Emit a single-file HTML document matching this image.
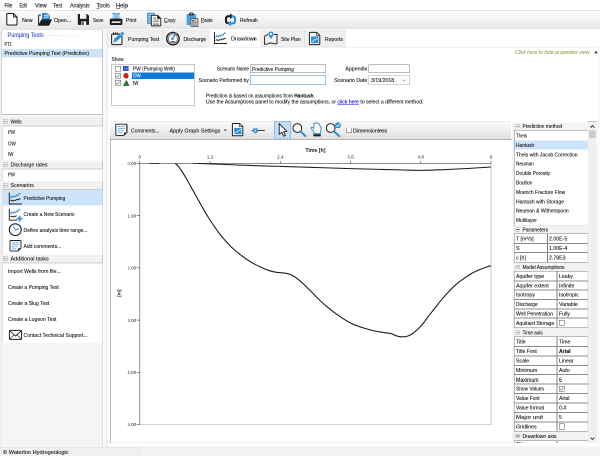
<!DOCTYPE html>
<html><head><meta charset="utf-8"><title>Pumping Test Analysis</title>
<style>
html,body{margin:0;padding:0;background:#f0f0f0;overflow:hidden;}
body{width:600px;height:456px;}
#root{position:absolute;left:0;top:0;width:1200px;height:912px;transform:scale(0.5);transform-origin:0 0;will-change:transform;background:#f0f0f0;font-family:"Liberation Sans",sans-serif;font-size:11px;color:#101010;overflow:hidden;}
.a{position:absolute;box-sizing:border-box;}
.t{font-size:11.6px;-webkit-text-stroke:0.2px;}
.s{font-size:12px;-webkit-text-stroke:0.2px;}
.s2{font-size:11px;-webkit-text-stroke:0.2px;}
.hl{background:#cce4fa;}
.hdr{background:#f1f1f1;border-bottom:1px solid #c9c9c9;border-right:1.4px solid #9c9ca6;}
.wb{background:#fff;}
u{text-decoration:underline;}

</style></head><body>
<div id="root">
<div class="a " style="left:0.00px;top:0.00px;width:1200.00px;height:21.40px;background:#fff;border-bottom:1.4px solid #cbcbcb;"></div>
<div class="a s" style="left:9.00px;top:3.90px;line-height:14px;white-space:nowrap;transform:scaleX(0.791);transform-origin:0 50%;">File</div>
<div class="a s" style="left:39.00px;top:3.90px;line-height:14px;white-space:nowrap;transform:scaleX(0.700);transform-origin:0 50%;">Edit</div>
<div class="a s" style="left:70.00px;top:3.90px;line-height:14px;white-space:nowrap;transform:scaleX(0.903);transform-origin:0 50%;">View</div>
<div class="a s" style="left:106.40px;top:3.90px;line-height:14px;white-space:nowrap;transform:scaleX(0.831);transform-origin:0 50%;">Test</div>
<div class="a s" style="left:140.00px;top:3.90px;line-height:14px;white-space:nowrap;transform:scaleX(0.879);transform-origin:0 50%;">Analysis</div>
<div class="a s" style="left:192.80px;top:3.90px;line-height:14px;white-space:nowrap;transform:scaleX(0.957);transform-origin:0 50%;"><u>T</u>ools</div>
<div class="a s" style="left:232.40px;top:3.90px;line-height:14px;white-space:nowrap;transform:scaleX(0.944);transform-origin:0 50%;"><u>H</u>elp</div>
<div class="a " style="left:0.00px;top:21.40px;width:1200.00px;height:36.40px;background:linear-gradient(#fdfdfd,#f5f5f5 45%,#e5e5e5);"></div>
<div class="a " style="left:0.00px;top:57.80px;width:1200.00px;height:2.20px;background:#fbfbfb;"></div>
<div class="a s2" style="left:43.80px;top:32.60px;line-height:14px;white-space:nowrap;transform:scaleX(0.958);transform-origin:0 50%;">New</div>
<div class="a s2" style="left:108.00px;top:32.60px;line-height:14px;white-space:nowrap;transform:scaleX(0.953);transform-origin:0 50%;">Open...</div>
<div class="a s2" style="left:185.50px;top:32.60px;line-height:14px;white-space:nowrap;transform:scaleX(0.833);transform-origin:0 50%;">Save</div>
<div class="a s2" style="left:252.00px;top:32.60px;line-height:14px;white-space:nowrap;transform:scaleX(0.937);transform-origin:0 50%;">Print</div>
<div class="a s2" style="left:327.50px;top:32.60px;line-height:14px;white-space:nowrap;transform:scaleX(0.899);transform-origin:0 50%;"><u>C</u>opy</div>
<div class="a s2" style="left:402.00px;top:32.60px;line-height:14px;white-space:nowrap;transform:scaleX(0.832);transform-origin:0 50%;"><u>P</u>aste</div>
<div class="a s2" style="left:480.00px;top:32.60px;line-height:14px;white-space:nowrap;transform:scaleX(0.919);transform-origin:0 50%;">Refresh</div>
<svg class="a" style="left:10.00px;top:24.00px" width="28" height="30" viewBox="5 12 14 15"><path d="M7.6 13.5 H13.4 L17 17 V24.2 Q17 25 16.2 25 H7.6 Q6.8 25 6.8 24.2 V14.3 Q6.8 13.5 7.6 13.5Z" fill="#fff" stroke="#1e1e1e" stroke-width="1.05" stroke-linejoin="round"/><path d="M13.4 13.6 V17 H16.9" fill="none" stroke="#1e1e1e" stroke-width="0.9"/></svg>
<svg class="a" style="left:72.00px;top:23.00px" width="36" height="32" viewBox="36 11.5 18 16"><path d="M42 19.5 V13.6 Q42 12.9 42.7 12.9 H47.2 L50 15.6 V19.5Z" fill="#2f8fd6"/><path d="M44 15.4 H47 M44 17.2 H48.4" stroke="#e6f2fb" stroke-width="0.8"/><path d="M47 13 V15.8 H49.8" fill="none" stroke="#cfe6f7" stroke-width="0.6"/><path d="M38.6 25 V15.6 Q38.6 15 39.2 15 H41" fill="none" stroke="#1e1e1e" stroke-width="1.0"/><path d="M41.6 19.6 H51.8 L48.9 25.5 H38.3Z" fill="#1e1e1e" stroke="#1e1e1e" stroke-width="0.5" stroke-linejoin="round"/></svg>
<svg class="a" style="left:152.00px;top:25.00px" width="30" height="28" viewBox="76 12.5 15 14"><path d="M77.8 14.6 Q77.8 14 78.4 14 H87.2 L89 15.8 V24.3 Q89 24.9 88.4 24.9 H78.4 Q77.8 24.9 77.8 24.3Z" fill="#1e1e1e"/><rect x="80" y="14" width="6.4" height="4.8" fill="#f4f9fd"/><rect x="84.6" y="14.2" width="1.2" height="3.6" fill="#d3e6f5"/><rect x="81.4" y="21.4" width="4.8" height="3.5" fill="#fff"/><rect x="82.2" y="22" width="1.4" height="2.9" fill="#1e1e1e"/></svg>
<svg class="a" style="left:216.00px;top:24.00px" width="32" height="28" viewBox="108 12 16 14"><rect x="112.6" y="13" width="7.2" height="6" fill="#9ccbee"/><rect x="112.6" y="13" width="7.2" height="1" fill="#2f8fd6"/><rect x="114.8" y="13" width="2.8" height="6" fill="#7fbbe8"/><rect x="109.8" y="18.6" width="12.6" height="6.4" rx="1.3" fill="#1e1e1e"/><rect x="111.8" y="21.4" width="8.8" height="1.5" fill="#fff"/></svg>
<svg class="a" style="left:291.00px;top:24.00px" width="34" height="30" viewBox="145.5 12 17 15"><rect x="147" y="12.8" width="8" height="11.2" rx="0.5" fill="#4d9fe0"/><path d="M148.4 14.8 H153.6 M148.4 16.6 H151 M148.4 18.4 H151 M148.4 20.2 H151 M148.4 22 H151" stroke="#d8ebf9" stroke-width="0.7"/><path d="M152 15.3 H157.6 L160.8 18.4 V25.2 Q160.8 25.9 160.1 25.9 H152 Q151.3 25.9 151.3 25.2 V16 Q151.3 15.3 152 15.3Z" fill="#fafafa" stroke="#1e1e1e" stroke-width="0.95"/><path d="M157.4 15.4 V18.6 H160.6" fill="#1e1e1e" stroke="#1e1e1e" stroke-width="0.4"/><path d="M153 20 H159 M153 21.6 H159 M153 23.2 H159 M153 24.6 H159" stroke="#777" stroke-width="0.7"/><path d="M153 18 H156" stroke="#555" stroke-width="0.8"/></svg>
<svg class="a" style="left:371.00px;top:23.00px" width="28" height="33.0" viewBox="185.5 11.5 14 16.5"><rect x="186.6" y="14" width="9.6" height="11" rx="0.8" fill="#4d9fe0"/><path d="M189 15.4 V14.2 Q189 12.4 191.4 12.4 Q193.8 12.4 193.8 14.2 V15.4Z" fill="#1e1e1e"/><rect x="190.4" y="13.3" width="2" height="1" fill="#cfe6f7"/><rect x="190.9" y="18.6" width="7" height="8" fill="#d2d2d2" stroke="#4a4a4a" stroke-width="0.7"/><path d="M195.6 18.8 V20.9 H197.7" fill="#fff" stroke="#4a4a4a" stroke-width="0.4"/><path d="M192 22.6 H196.8 M192 23.9 H196.8 M192 25.2 H196.8" stroke="#666" stroke-width="0.65"/><rect x="192" y="19.9" width="2.4" height="1.6" fill="#666"/></svg>
<svg class="a" style="left:447.00px;top:25.00px" width="28" height="29.0" viewBox="223.5 12.5 14 14.5"><path d="M229.6 23.2 H228.4 Q226 23.2 226 20.8 V19 Q226 16.2 228.8 16.2 H231" fill="none" stroke="#1e1e1e" stroke-width="2.1"/><path d="M230.2 13.2 L233.6 16.2 L230.2 19.2Z" fill="#1e1e1e"/><path d="M231.4 16.4 H232.6 Q235 16.4 235 18.8 V20.6 Q235 23.4 232.2 23.4 H230" fill="none" stroke="#2f8fd6" stroke-width="2.1"/><path d="M230.8 20.4 L227.4 23.4 L230.8 26.4Z" fill="#2f8fd6"/></svg>
<div class="a " style="left:2.40px;top:59.20px;width:203.40px;height:170.00px;background:#fff;border:1px solid #8e94a6;border-left:1.4px solid #a6aab4;border-top:1px solid #c8c8c8;"></div>
<div class="a s" style="left:15.20px;top:63.40px;line-height:14px;white-space:nowrap;transform:scaleX(0.922);transform-origin:0 50%;color:#3347c4;">Pumping Tests</div>
<div class="a " style="left:93.00px;top:70.80px;width:108.00px;height:1.20px;background:linear-gradient(90deg,#d6ddf5,#fff);"></div>
<div class="a t" style="left:9.00px;top:81.00px;line-height:14px;white-space:nowrap;transform:scaleX(0.700);transform-origin:0 50%;">PT1</div>
<div class="a hl" style="left:4.00px;top:97.60px;width:201.00px;height:17.20px;"></div>
<div class="a t" style="left:9.00px;top:99.40px;line-height:14px;white-space:nowrap;transform:scaleX(0.906);transform-origin:0 50%;">Predictive Pumping Test (Prediction)</div>
<div class="a " style="left:3.00px;top:229.60px;width:203.00px;height:4.80px;background:#f8f8f8;"></div>
<div class="a hdr" style="left:3.00px;top:234.00px;width:203.00px;height:17.60px;"></div>
<div class="a " style="left:6.40px;top:238.40px;width:8.60px;height:8.60px;border:1px solid #a2a8b8;background:linear-gradient(#fff,#eceef4);"></div>
<div class="a " style="left:8.40px;top:242.00px;width:4.60px;height:1.40px;background:#445;"></div>
<div class="a t" style="left:21.00px;top:235.80px;line-height:14px;white-space:nowrap;transform:scaleX(0.796);transform-origin:0 50%;">Wells</div>
<div class="a " style="left:4.00px;top:251.60px;width:202.00px;height:70.40px;background:#fff;border-left:1.6px solid #bdbdc2;border-right:1px solid #c4c4cc;border-top:1.4px solid #d0d0d0;border-radius:4px 0 0 0;"></div>
<div class="a t" style="left:16.00px;top:257.00px;line-height:14px;white-space:nowrap;transform:scaleX(0.749);transform-origin:0 50%;">PW</div>
<div class="a t" style="left:16.00px;top:279.60px;line-height:14px;white-space:nowrap;transform:scaleX(0.781);transform-origin:0 50%;">OW</div>
<div class="a t" style="left:16.00px;top:301.40px;line-height:14px;white-space:nowrap;transform:scaleX(0.762);transform-origin:0 50%;">IW</div>
<div class="a hdr" style="left:3.00px;top:321.20px;width:203.00px;height:16.40px;"></div>
<div class="a " style="left:6.40px;top:325.00px;width:8.60px;height:8.60px;border:1px solid #a2a8b8;background:linear-gradient(#fff,#eceef4);"></div>
<div class="a " style="left:8.40px;top:328.60px;width:4.60px;height:1.40px;background:#445;"></div>
<div class="a t" style="left:21.00px;top:322.40px;line-height:14px;white-space:nowrap;transform:scaleX(0.911);transform-origin:0 50%;">Discharge rates</div>
<div class="a " style="left:4.00px;top:337.60px;width:202.00px;height:24.80px;background:#fff;border-left:1.6px solid #bdbdc2;border-right:1px solid #c4c4cc;border-top:1.4px solid #d0d0d0;border-radius:4px 0 0 0;"></div>
<div class="a t" style="left:16.00px;top:342.40px;line-height:14px;white-space:nowrap;transform:scaleX(0.749);transform-origin:0 50%;">PW</div>
<div class="a hdr" style="left:3.00px;top:362.00px;width:203.00px;height:16.80px;"></div>
<div class="a " style="left:6.40px;top:366.00px;width:8.60px;height:8.60px;border:1px solid #a2a8b8;background:linear-gradient(#fff,#eceef4);"></div>
<div class="a " style="left:8.40px;top:369.60px;width:4.60px;height:1.40px;background:#445;"></div>
<div class="a t" style="left:21.00px;top:363.40px;line-height:14px;white-space:nowrap;transform:scaleX(0.900);transform-origin:0 50%;">Scenarios</div>
<div class="a " style="left:4.00px;top:378.80px;width:202.00px;height:130.00px;background:#fff;border-left:1.6px solid #bdbdc2;border-right:1px solid #c4c4cc;border-top:1.4px solid #d0d0d0;border-radius:4px 0 0 0;"></div>
<div class="a hl" style="left:6.00px;top:379.60px;width:198.60px;height:31.60px;"></div>
<div class="a t" style="left:47.40px;top:388.80px;line-height:14px;white-space:nowrap;transform:scaleX(0.837);transform-origin:0 50%;">Predictive Pumping</div>
<div class="a t" style="left:47.40px;top:421.00px;line-height:14px;white-space:nowrap;transform:scaleX(0.851);transform-origin:0 50%;">Create a New Scenario</div>
<div class="a t" style="left:47.40px;top:453.00px;line-height:14px;white-space:nowrap;transform:scaleX(0.878);transform-origin:0 50%;">Define analysis time range...</div>
<div class="a t" style="left:47.40px;top:484.60px;line-height:14px;white-space:nowrap;transform:scaleX(0.869);transform-origin:0 50%;">Add comments...</div>
<div class="a hdr" style="left:3.00px;top:509.20px;width:203.00px;height:16.40px;"></div>
<div class="a " style="left:6.40px;top:513.00px;width:8.60px;height:8.60px;border:1px solid #a2a8b8;background:linear-gradient(#fff,#eceef4);"></div>
<div class="a " style="left:8.40px;top:516.60px;width:4.60px;height:1.40px;background:#445;"></div>
<div class="a t" style="left:21.00px;top:510.40px;line-height:14px;white-space:nowrap;transform:scaleX(0.941);transform-origin:0 50%;">Additional tasks</div>
<div class="a " style="left:4.00px;top:525.60px;width:202.00px;height:160.00px;background:#fff;border-left:1.6px solid #bdbdc2;border-right:1px solid #c4c4cc;border-top:1.4px solid #d0d0d0;border-radius:4px 0 0 0;"></div>
<div class="a t" style="left:16.00px;top:535.00px;line-height:14px;white-space:nowrap;transform:scaleX(0.892);transform-origin:0 50%;">Import Wells from file...</div>
<div class="a t" style="left:16.00px;top:567.20px;line-height:14px;white-space:nowrap;transform:scaleX(0.863);transform-origin:0 50%;">Create a Pumping Test</div>
<div class="a t" style="left:16.00px;top:599.40px;line-height:14px;white-space:nowrap;transform:scaleX(0.868);transform-origin:0 50%;">Create a Slug Test</div>
<div class="a t" style="left:16.00px;top:631.40px;line-height:14px;white-space:nowrap;transform:scaleX(0.875);transform-origin:0 50%;">Create a Lugeon Test</div>
<div class="a t" style="left:47.40px;top:663.00px;line-height:14px;white-space:nowrap;transform:scaleX(0.887);transform-origin:0 50%;">Contact Technical Support...</div>
<div class="a " style="left:3.00px;top:685.60px;width:203.00px;height:208.00px;background:#f5f5f5;border-right:2px solid #e2e2e2;"></div>
<svg class="a" style="left:16.00px;top:383.00px" width="30" height="28" viewBox="8 191.5 15 14"><path d="M9.3 192.5 V204.0 H21.8" fill="none" stroke="#1e1e1e" stroke-width="0.95"/><path d="M10.3 198.1 L11.5 196.1 L12.700000000000001 197.5 L14.100000000000001 195.9 L15.3 196.7 L16.700000000000003 194.9 L17.700000000000003 195.9 L19.3 193.3 L20.700000000000003 194.1" fill="none" stroke="#2f8fd6" stroke-width="0.95" stroke-linejoin="round"/><path d="M10.3 200.9 L11.700000000000001 200.1 L12.9 201.1 L14.3 200.1 L15.5 200.5 L16.9 199.3 L18.1 199.9 L19.5 198.7 L20.700000000000003 199.1" fill="none" stroke="#1e1e1e" stroke-width="0.9" stroke-linejoin="round"/></svg>
<svg class="a" style="left:16.00px;top:415.00px" width="30" height="30" viewBox="8 207.5 15 15"><path d="M9.3 208.5 V220.2 H17.2" fill="none" stroke="#1e1e1e" stroke-width="0.95"/><path d="M10.3 214.1 L11.5 212.1 L12.7 213.5 L14.1 211.9 L15.3 212.7 L16.7 210.9 L17.7 211.9 L19.3 209.3 L20.7 210.1" fill="none" stroke="#2f8fd6" stroke-width="0.95" stroke-linejoin="round"/><path d="M10.3 216.9 L11.7 216.1 L12.9 217.1 L14.3 216.1 L15.5 216.5 L16.6 215.6" fill="none" stroke="#1e1e1e" stroke-width="0.9" stroke-linejoin="round"/><path d="M19.6 215.8 V221.6 M16.7 218.7 H22.5" stroke="#2f8fd6" stroke-width="1.7"/></svg>
<svg class="a" style="left:16.00px;top:445.00px" width="30" height="30" viewBox="8 222.5 15 15"><circle cx="15.3" cy="229.7" r="5.9" fill="#fff" stroke="#1e1e1e" stroke-width="1.15"/><path d="M13.6 226.6 L15.5 230.2 L18.6 228.6" fill="none" stroke="#2f8fd6" stroke-width="1.0" stroke-linejoin="round" stroke-linecap="round"/></svg>
<svg class="a" style="left:18.00px;top:479.00px" width="28" height="26" viewBox="9 239.5 14 13"><path d="M10.8 240.5 H20.2 Q21 240.5 21 241.3 V248.1 L18 251.1 H10.8 Q10 251.1 10 250.29999999999998 V241.3 Q10 240.5 10.8 240.5Z" fill="#f3f8fd" stroke="#1e1e1e" stroke-width="0.9" stroke-linejoin="round"/><path d="M21 248.5 H18.4 V251.1Z" fill="#1e1e1e" stroke="#1e1e1e" stroke-width="0.4"/><path d="M12 242.9 H15 M16 242.9 H19 M12 244.9 H19 M12 246.9 H14.4 M15.4 246.9 H17.6 M12 248.9 H16.4" stroke="#2f8fd6" stroke-width="0.75" opacity="0.8"/></svg>
<svg class="a" style="left:16.00px;top:658.00px" width="30" height="24" viewBox="8 329 15 12"><rect x="9.4" y="330.4" width="12.2" height="9" rx="1" fill="#fff" stroke="#1e1e1e" stroke-width="1.0"/><path d="M9.8 330.9 L15.5 336 L21.2 330.9" fill="none" stroke="#1e1e1e" stroke-width="0.85"/><path d="M9.8 339 L13.8 335 M21.2 339 L17.2 335" stroke="#1e1e1e" stroke-width="0.6"/></svg>
<div class="a " style="left:206.00px;top:60.00px;width:7.20px;height:833.20px;background:#f9f9f9;border-right:1px solid #ececec;"></div>
<div class="a " style="left:213.60px;top:60.00px;width:986.40px;height:833.20px;background:#fff;"></div>
<div class="a " style="left:213.60px;top:93.80px;width:983.80px;height:799.40px;border-top:1px solid #e4e4e4;border-right:1px solid #e4e4e4;border-left:1px solid #e4e4e4;"></div>
<div class="a " style="left:214.00px;top:59.60px;width:111.00px;height:34.00px;background:#f0f0f0;border:1px solid #e2e2e2;"></div>
<div class="a s2" style="left:256.00px;top:71.00px;line-height:14px;white-space:nowrap;transform:scaleX(0.939);transform-origin:0 50%;">Pumping Test</div>
<div class="a " style="left:325.00px;top:59.60px;width:94.40px;height:34.00px;background:#f0f0f0;border:1px solid #e2e2e2;"></div>
<div class="a s2" style="left:367.00px;top:71.00px;line-height:14px;white-space:nowrap;transform:scaleX(0.917);transform-origin:0 50%;">Discharge</div>
<div class="a " style="left:419.40px;top:59.60px;width:101.80px;height:34.80px;background:#fff;"></div>
<div class="a s2" style="left:462.00px;top:70.00px;line-height:14px;white-space:nowrap;transform:scaleX(0.989);transform-origin:0 50%;">Drawdown</div>
<div class="a " style="left:521.20px;top:59.60px;width:88.00px;height:34.00px;background:#f0f0f0;border:1px solid #e2e2e2;"></div>
<div class="a s2" style="left:562.00px;top:71.00px;line-height:14px;white-space:nowrap;transform:scaleX(0.895);transform-origin:0 50%;">Site Plan</div>
<div class="a " style="left:609.20px;top:59.60px;width:82.80px;height:34.00px;background:#f0f0f0;border:1px solid #e2e2e2;"></div>
<div class="a s2" style="left:650.00px;top:71.00px;line-height:14px;white-space:nowrap;transform:scaleX(0.929);transform-origin:0 50%;">Reports</div>
<svg class="a" style="left:218.00px;top:61.00px" width="34" height="32" viewBox="109 30.5 17 16"><rect x="111.6" y="34" width="10.4" height="10.6" rx="1.2" fill="none" stroke="#1e1e1e" stroke-width="1.0"/><path d="M113.4 32.2 V35 M115.3 32.2 V35 M117.2 32.2 V35" stroke="#1e1e1e" stroke-width="0.85"/><path d="M113.2 42.4 L114 39.4 L121.4 32.2 Q122.6 31.6 123.6 32.8 Q124.4 33.8 123.6 34.8 L116.2 41.8Z" fill="#2f8fd6"/><path d="M114.6 40.4 L115.6 41.4 M120.2 33.4 L122.4 35.8" stroke="#e4f1fb" stroke-width="0.6"/></svg>
<svg class="a" style="left:330.00px;top:62.00px" width="32" height="32" viewBox="165 31 16 16"><circle cx="172.9" cy="38.6" r="6.2" fill="#fff" stroke="#1e1e1e" stroke-width="1.4"/><circle cx="172.9" cy="38.6" r="4.6" fill="none" stroke="#7c7c7c" stroke-width="1.0"/><path d="M172.2 39.4 L175.8 33.4" stroke="#2f8fd6" stroke-width="1.5" stroke-linecap="round"/><circle cx="172.4" cy="39" r="1.2" fill="#2f8fd6"/><path d="M170.8 41.8 H175" stroke="#1e1e1e" stroke-width="0.9"/></svg>
<svg class="a" style="left:426.00px;top:62.00px" width="32" height="28" viewBox="213 31 16 14"><path d="M214.5 32 V43.5 H227.0" fill="none" stroke="#1e1e1e" stroke-width="0.95"/><path d="M215.5 37.6 L216.7 35.6 L217.9 37 L219.3 35.4 L220.5 36.2 L221.9 34.4 L222.9 35.4 L224.5 32.8 L225.9 33.6" fill="none" stroke="#2f8fd6" stroke-width="0.95" stroke-linejoin="round"/><path d="M215.5 40.4 L216.9 39.6 L218.1 40.6 L219.5 39.6 L220.7 40 L222.1 38.8 L223.3 39.4 L224.7 38.2 L225.9 38.6" fill="none" stroke="#1e1e1e" stroke-width="0.9" stroke-linejoin="round"/></svg>
<svg class="a" style="left:526.00px;top:61.00px" width="32" height="30" viewBox="263 30.5 16 15"><path d="M264.6 36 L268 34.4 M274 34.6 L277 34.4 V43.6 Q275 44.2 272.8 43.4 Q270.4 42.6 268.6 43.4 Q266.6 44.4 264.6 44.4 V36" fill="none" stroke="#1e1e1e" stroke-width="0.95" stroke-linejoin="round"/><path d="M271 38.8 Q268.4 35.6 268.4 34 Q268.4 31.6 271 31.6 Q273.6 31.6 273.6 34 Q273.6 35.6 271 38.8Z" fill="#2f8fd6"/><circle cx="271" cy="34" r="1.1" fill="#fff"/></svg>
<svg class="a" style="left:616.00px;top:62.00px" width="28" height="30" viewBox="308 31 14 15"><path d="M310 32.4 H316.6 L319.8 35.4 V44 Q319.8 44.6 319.2 44.6 H310 Q309.4 44.6 309.4 44 V33 Q309.4 32.4 310 32.4Z" fill="#fff" stroke="#1e1e1e" stroke-width="1.0"/><path d="M316.4 32.6 V35.6 H319.6" fill="#ddd" stroke="#1e1e1e" stroke-width="0.6"/><rect x="311" y="36.4" width="7.4" height="6.8" fill="#2f8fd6"/><path d="M311.6 41.6 Q313.4 41.4 314.4 40 Q315.4 38.8 317.8 38.8" fill="none" stroke="#e8f3fb" stroke-width="0.8"/></svg>
<div class="a t" style="right:21.60px;top:97.00px;line-height:14px;white-space:nowrap;transform:scaleX(0.874);transform-origin:100% 50%;font-style:italic;color:#8c8c34;-webkit-text-stroke:0;">Click here to hide properties view</div>
<svg class="a" style="left:1187.6px;top:101.4px" width="8" height="6" viewBox="0 0 8 6"><path d="M0.5 5.5 L4 0.8 L7.5 5.5Z" fill="#222"/></svg>
<div class="a t" style="left:223.40px;top:111.40px;line-height:14px;white-space:nowrap;transform:scaleX(0.841);transform-origin:0 50%;">Show</div>
<div class="a " style="left:223.20px;top:128.40px;width:166.60px;height:82.40px;background:#fff;border:1px solid #8e93a0;"></div>
<div class="a " style="left:263.60px;top:144.60px;width:124.80px;height:13.40px;background:#0a78d7;"></div>
<div class="a " style="left:230.20px;top:131.60px;width:11.60px;height:11.60px;background:#fff;border:1px solid #5a5a5a;"></div>
<div class="a t" style="left:265.60px;top:130.40px;line-height:14px;white-space:nowrap;transform:scaleX(0.830);transform-origin:0 50%;">PW (Pumping Well)</div>
<div class="a " style="left:230.20px;top:145.60px;width:11.60px;height:11.60px;background:#fff;border:1px solid #5a5a5a;"></div>
<svg class="a" style="left:230.2px;top:145.6px" width="11.6" height="11.6" viewBox="0 0 10.4 10.4"><path d="M2.4 5.2 L4.4 7.4 L8 2.8" fill="none" stroke="#666" stroke-width="1.1"/></svg>
<div class="a t" style="left:265.60px;top:144.40px;line-height:14px;white-space:nowrap;transform:scaleX(0.781);transform-origin:0 50%;color:#fff;">OW</div>
<div class="a " style="left:230.20px;top:159.80px;width:11.60px;height:11.60px;background:#fff;border:1px solid #5a5a5a;"></div>
<svg class="a" style="left:230.2px;top:159.79999999999998px" width="11.6" height="11.6" viewBox="0 0 10.4 10.4"><path d="M2.4 5.2 L4.4 7.4 L8 2.8" fill="none" stroke="#666" stroke-width="1.1"/></svg>
<div class="a t" style="left:265.60px;top:158.60px;line-height:14px;white-space:nowrap;transform:scaleX(0.762);transform-origin:0 50%;">IW</div>
<div class="a " style="left:246.40px;top:132.00px;width:10.80px;height:10.40px;background:#4470e4;border:1px solid #1c3fa0;"></div>
<div class="a " style="left:246.60px;top:145.80px;width:10.80px;height:10.80px;background:#d81c1c;border:1px solid #901010;border-radius:50%;"></div>
<svg class="a" style="left:245.6px;top:159.6px" width="13" height="12" viewBox="0 0 13 12"><path d="M6.5 0.8 L12.2 11.2 L0.8 11.2Z" fill="#1f8a3a" stroke="#0e5020" stroke-width="1"/></svg>
<div class="a t" style="right:702.40px;top:130.40px;line-height:14px;white-space:nowrap;transform:scaleX(0.806);transform-origin:100% 50%;">Scenario Name</div>
<div class="a " style="left:500.00px;top:129.20px;width:152.00px;height:16.80px;background:#fff;border:1px solid #7a7a7a;"></div>
<div class="a t" style="left:504.00px;top:130.80px;line-height:14px;white-space:nowrap;transform:scaleX(0.837);transform-origin:0 50%;">Predictive Pumping</div>
<div class="a t" style="right:702.40px;top:153.20px;line-height:14px;white-space:nowrap;transform:scaleX(0.847);transform-origin:100% 50%;">Scenario Performed by</div>
<div class="a " style="left:500.00px;top:151.20px;width:152.00px;height:18.80px;background:#fff;border:1.6px solid #3b8ee0;"></div>
<div class="a t" style="right:465.40px;top:130.40px;line-height:14px;white-space:nowrap;transform:scaleX(0.900);transform-origin:100% 50%;">Appendix</div>
<div class="a " style="left:737.00px;top:129.20px;width:81.60px;height:16.80px;background:#fff;border:1px solid #7a7a7a;"></div>
<div class="a t" style="right:465.40px;top:153.20px;line-height:14px;white-space:nowrap;transform:scaleX(0.900);transform-origin:100% 50%;">Scenario Date</div>
<div class="a " style="left:737.00px;top:151.20px;width:83.20px;height:18.80px;background:#fff;border:1px solid #adadad;"></div>
<div class="a t" style="left:742.00px;top:153.40px;line-height:14px;white-space:nowrap;transform:scaleX(0.900);transform-origin:0 50%;">3/19/2018</div>
<svg class="a" style="left:804.4px;top:158px" width="9" height="6" viewBox="0 0 9 6"><path d="M1 1 L4.5 4.6 L8 1" fill="none" stroke="#444" stroke-width="1"/></svg>
<div class="a t" style="left:412.00px;top:184.00px;line-height:14px;white-space:nowrap;transform:scaleX(0.832);transform-origin:0 50%;">Prediction is based on assumptions from <b>Hantush</b>.</div>
<div class="a t" style="left:412.00px;top:196.20px;line-height:14px;white-space:nowrap;transform:scaleX(0.881);transform-origin:0 50%;">Use the Assumptions panel to modify the assumptions, or <span style="color:#0000ee;text-decoration:underline">click here</span> to select a different method.</div>
<div class="a " style="left:220.00px;top:242.00px;width:802.00px;height:34.80px;background:linear-gradient(#fafafa,#f0f0f0 45%,#e2e2e2);border-top:1px solid #e2e2e2;border-bottom:1px solid #bdbdbd;"></div>
<div class="a s2" style="left:262.00px;top:253.60px;line-height:14px;white-space:nowrap;transform:scaleX(0.917);transform-origin:0 50%;">Comments...</div>
<div class="a s2" style="left:339.20px;top:253.60px;line-height:14px;white-space:nowrap;transform:scaleX(0.977);transform-origin:0 50%;">Apply Graph Settings</div>
<svg class="a" style="left:446.8px;top:259.2px" width="7" height="4" viewBox="0 0 7 4"><path d="M0.5 0.3 L6.5 0.3 L3.5 3.6Z" fill="#222"/></svg>
<div class="a " style="left:548.00px;top:243.40px;width:34.00px;height:33.20px;background:#c3def6;border:1px solid #4f9be3;"></div>
<div class="a " style="left:692.60px;top:254.60px;width:11.60px;height:11.60px;background:#fff;border:1px solid #555;"></div>
<div class="a s2" style="left:706.00px;top:253.60px;line-height:14px;white-space:nowrap;transform:scaleX(0.953);transform-origin:0 50%;">Dimensionless</div>
<svg class="a" style="left:229.00px;top:246.00px" width="28" height="28" viewBox="114.5 123 14 14"><path d="M116.6 124.2 H126.0 Q126.8 124.2 126.8 125.0 V132.4 L123.8 135.4 H116.6 Q115.8 135.4 115.8 134.6 V125.0 Q115.8 124.2 116.6 124.2Z" fill="#f3f8fd" stroke="#1e1e1e" stroke-width="0.9" stroke-linejoin="round"/><path d="M126.8 132.8 H124.2 V135.4Z" fill="#1e1e1e" stroke="#1e1e1e" stroke-width="0.4"/><path d="M117.8 126.60000000000001 H120.8 M121.8 126.60000000000001 H124.8 M117.8 128.6 H124.8 M117.8 130.6 H120.2 M121.2 130.6 H123.39999999999999 M117.8 132.6 H122.2" stroke="#2f8fd6" stroke-width="0.75" opacity="0.8"/></svg>
<svg class="a" style="left:462.00px;top:244.00px" width="28" height="30" viewBox="231 122 14 15"><path d="M233 123.5 H239.6 L242.8 126.5 V135.2 Q242.8 135.8 242.2 135.8 H233 Q232.4 135.8 232.4 135.2 V124.1 Q232.4 123.5 233 123.5Z" fill="#fff" stroke="#1e1e1e" stroke-width="1.0"/><path d="M239.4 123.7 V126.7 H242.6" fill="#ddd" stroke="#1e1e1e" stroke-width="0.6"/><rect x="234.2" y="127.6" width="7.2" height="6.6" fill="#2f8fd6"/><path d="M234.8 132.8 Q236.6 132.6 237.6 131.2 Q238.6 130 241 130" fill="none" stroke="#e8f3fb" stroke-width="0.8"/></svg>
<svg class="a" style="left:500.00px;top:252.00px" width="34" height="18" viewBox="250 126 17 9"><path d="M251.6 130.4 H264.8" stroke="#1e1e1e" stroke-width="0.85"/><path d="M253.2 128.2 H257.7 V131 Q257.7 132.8 255.45 133.7 Q253.2 132.8 253.2 131Z" fill="#3f99dc"/><ellipse cx="255.45" cy="130.7" rx="0.55" ry="0.9" fill="#fff"/></svg>
<svg class="a" style="left:554.00px;top:244.00px" width="24" height="32" viewBox="277 122 12 16"><path d="M279.2 123.6 V134.4 L281.8 132.2 L283.6 136.2 L285.4 135.4 L283.6 131.6 L287 131.4Z" fill="#fff" stroke="#1e1e1e" stroke-width="0.9" stroke-linejoin="round"/></svg>
<svg class="a" style="left:583.00px;top:244.00px" width="32" height="32" viewBox="291.5 122 16 16"><circle cx="297.3" cy="128" r="4.4" fill="#fff" fill-opacity="0.6" stroke="#1e1e1e" stroke-width="1.0"/><path d="M300.6 131.4 L305.4 136" stroke="#2f8fd6" stroke-width="2.1" stroke-linecap="round"/></svg>
<svg class="a" style="left:619.00px;top:243.00px" width="28" height="32" viewBox="309.5 121.5 14 16"><path d="M313.8 133.6 V131.4 L311.2 128.6 Q310.6 127.4 311.8 127.2 Q312.8 127.2 313.8 128.4 V124.4 Q313.8 123 315.6 123 H317 Q319 123.2 319.6 125 L321 127.6 Q321.4 129 320.8 130.4 L320.4 133.6Z" fill="#fff" fill-opacity="0.7" stroke="#2f8fd6" stroke-width="0.95" stroke-linejoin="round"/><rect x="313.4" y="134.2" width="7.4" height="2.2" rx="0.4" fill="#1e1e1e"/></svg>
<svg class="a" style="left:650.00px;top:243.00px" width="34" height="33.0" viewBox="325 121.5 17 16.5"><circle cx="330.7" cy="128" r="4.4" fill="#fff" fill-opacity="0.6" stroke="#1e1e1e" stroke-width="1.0"/><path d="M334 131.4 L339.4 136.2" stroke="#2f8fd6" stroke-width="2.1" stroke-linecap="round"/><circle cx="338" cy="125.2" r="2.9" fill="#2f8fd6"/><path d="M336.5 125.3 L337.6 126.5 L339.6 124" fill="none" stroke="#fff" stroke-width="0.8"/></svg>
<div class="a " style="left:220.00px;top:278.00px;width:804.00px;height:608.00px;background:#fff;border-left:1.6px solid #6e6e6e;border-top:1.6px solid #6e6e6e;border-bottom:1px solid #e3e3e3;"></div>
<svg class="a" style="left:220px;top:278px" width="804" height="608" viewBox="110 139 402 304"><style>.ct{font:4.7px "Liberation Sans",sans-serif;fill:#262626}.cb{font:bold 5.2px "Liberation Sans",sans-serif;fill:#222}</style><path d="M491 163.4 V424.5 H139.8" fill="none" stroke="#a4a4a4" stroke-width="0.6"/><path d="M139.8 424.5 V163.4 H491" fill="none" stroke="#4a4a4a" stroke-width="0.6"/><path d="M139.80 161.0 V163.4" stroke="#3a3a3a" stroke-width="0.6"/><text x="139.80" y="158.7" text-anchor="middle" class="ct">0</text><path d="M210.04 161.0 V163.4" stroke="#3a3a3a" stroke-width="0.6"/><text x="210.04" y="158.7" text-anchor="middle" class="ct">1.2</text><path d="M280.28 161.0 V163.4" stroke="#3a3a3a" stroke-width="0.6"/><text x="280.28" y="158.7" text-anchor="middle" class="ct">2.4</text><path d="M350.52 161.0 V163.4" stroke="#3a3a3a" stroke-width="0.6"/><text x="350.52" y="158.7" text-anchor="middle" class="ct">3.6</text><path d="M420.76 161.0 V163.4" stroke="#3a3a3a" stroke-width="0.6"/><text x="420.76" y="158.7" text-anchor="middle" class="ct">4.8</text><path d="M491.00 161.0 V163.4" stroke="#3a3a3a" stroke-width="0.6"/><text x="491.00" y="158.7" text-anchor="middle" class="ct">6</text><path d="M136.8 163.40 H139.8" stroke="#3a3a3a" stroke-width="0.6"/><text x="136.2" y="165.10" text-anchor="end" class="ct">0.00</text><path d="M136.8 215.62 H139.8" stroke="#3a3a3a" stroke-width="0.6"/><text x="136.2" y="217.32" text-anchor="end" class="ct">1.00</text><path d="M136.8 267.84 H139.8" stroke="#3a3a3a" stroke-width="0.6"/><text x="136.2" y="269.54" text-anchor="end" class="ct">2.00</text><path d="M136.8 320.06 H139.8" stroke="#3a3a3a" stroke-width="0.6"/><text x="136.2" y="321.76" text-anchor="end" class="ct">3.00</text><path d="M136.8 372.28 H139.8" stroke="#3a3a3a" stroke-width="0.6"/><text x="136.2" y="373.98" text-anchor="end" class="ct">4.00</text><path d="M136.8 424.50 H139.8" stroke="#3a3a3a" stroke-width="0.6"/><text x="136.2" y="426.20" text-anchor="end" class="ct">5.00</text><text x="315.4" y="152.2" text-anchor="middle" class="cb">Time [h]</text><text transform="translate(120.6 293.2) rotate(-90)" text-anchor="middle" class="cb" style="font-size:4.6px">[m]</text><path d="M149.2 163.5 H159.2" stroke="#333" stroke-width="0.95"/><path d="M193 163.55 H199" stroke="#333" stroke-width="0.9"/><path d="M198.50 163.50 C200.42 163.57 205.92 163.75 210.00 163.90 C214.08 164.05 218.00 164.20 223.00 164.40 C228.00 164.60 233.83 164.87 240.00 165.10 C246.17 165.33 253.33 165.58 260.00 165.80 C266.67 166.02 273.33 166.20 280.00 166.40 C286.67 166.60 293.33 166.80 300.00 167.00 C306.67 167.20 311.67 167.33 320.00 167.60 C328.33 167.87 340.00 168.30 350.00 168.60 C360.00 168.90 371.67 169.18 380.00 169.40 C388.33 169.62 394.17 169.75 400.00 169.90 C405.83 170.05 410.83 170.23 415.00 170.30 C419.17 170.37 420.83 170.38 425.00 170.30 C429.17 170.22 434.17 170.03 440.00 169.80 C445.83 169.57 454.17 169.20 460.00 168.90 C465.83 168.60 469.87 168.32 475.00 168.00 C480.13 167.68 488.17 167.17 490.80 167.00" fill="none" stroke="#1c1c1c" stroke-width="1.05" stroke-linejoin="round"/><path d="M175.30 163.40 C175.72 163.77 176.85 164.52 177.80 165.60 C178.75 166.68 179.57 167.73 181.00 169.90 C182.43 172.07 184.58 175.50 186.40 178.60 C188.22 181.70 190.07 185.20 191.90 188.50 C193.73 191.80 195.57 195.12 197.40 198.40 C199.23 201.68 201.07 205.02 202.90 208.20 C204.73 211.38 206.57 214.57 208.40 217.50 C210.23 220.43 212.08 223.13 213.90 225.80 C215.72 228.47 217.48 231.13 219.30 233.50 C221.12 235.87 222.97 237.92 224.80 240.00 C226.63 242.08 228.47 244.17 230.30 246.00 C232.13 247.83 233.97 249.45 235.80 251.00 C237.63 252.55 239.43 253.88 241.30 255.30 C243.17 256.72 244.88 258.08 247.00 259.50 C249.12 260.92 251.67 262.50 254.00 263.80 C256.33 265.10 258.67 266.23 261.00 267.30 C263.33 268.37 265.67 269.40 268.00 270.20 C270.33 271.00 272.67 271.67 275.00 272.10 C277.33 272.53 279.67 272.48 282.00 272.80 C284.33 273.12 286.93 273.37 289.00 274.00 C291.07 274.63 292.63 275.50 294.40 276.60 C296.17 277.70 297.55 278.85 299.60 280.60 C301.65 282.35 304.35 284.85 306.70 287.10 C309.05 289.35 311.37 291.77 313.70 294.10 C316.03 296.43 318.37 298.90 320.70 301.10 C323.03 303.30 325.37 305.35 327.70 307.30 C330.03 309.25 332.65 311.28 334.70 312.80 C336.75 314.32 338.45 315.33 340.00 316.40 C341.55 317.47 342.17 318.07 344.00 319.20 C345.83 320.33 348.67 322.05 351.00 323.20 C353.33 324.35 355.67 325.23 358.00 326.10 C360.33 326.97 362.67 327.68 365.00 328.40 C367.33 329.12 369.67 329.83 372.00 330.40 C374.33 330.97 376.67 331.40 379.00 331.80 C381.33 332.20 383.93 332.48 386.00 332.80 C388.07 333.12 389.77 333.22 391.40 333.70 C393.03 334.18 394.33 335.20 395.80 335.70 C397.27 336.20 398.60 336.53 400.20 336.70 C401.80 336.87 403.80 336.93 405.40 336.70 C407.00 336.47 408.33 336.03 409.80 335.30 C411.27 334.57 412.58 333.60 414.20 332.30 C415.82 331.00 417.90 329.12 419.50 327.50 C421.10 325.88 422.47 324.27 423.80 322.60 C425.13 320.93 425.70 319.85 427.50 317.50 C429.30 315.15 432.25 311.47 434.60 308.50 C436.95 305.53 439.27 302.48 441.60 299.70 C443.93 296.92 446.27 294.28 448.60 291.80 C450.93 289.32 453.27 286.87 455.60 284.80 C457.93 282.73 459.97 281.27 462.60 279.40 C465.23 277.53 468.47 275.27 471.40 273.60 C474.33 271.93 477.57 270.53 480.20 269.40 C482.83 268.27 485.43 267.40 487.20 266.80 C488.97 266.20 490.20 265.97 490.80 265.80" fill="none" stroke="#1c1c1c" stroke-width="1.1" stroke-linejoin="round"/></svg>
<div class="a " style="left:1025.20px;top:244.80px;width:168.80px;height:641.20px;background:#f0f0f0;"></div>
<div class="a " style="left:1177.20px;top:244.80px;width:16.80px;height:641.20px;background:#f0f0f0;"></div>
<div class="a " style="left:1176.40px;top:242.40px;width:17.40px;height:18.00px;background:#f2f2f2;border-top:1.2px solid #8c8c8c;"></div>
<div class="a " style="left:1178.20px;top:260.80px;width:13.20px;height:15.00px;background:#cbcbcb;"></div>
<svg class="a" style="left:1180px;top:248.8px" width="10" height="7" viewBox="0 0 10 7"><path d="M1.2 5.8 L5 2 L8.8 5.8" fill="none" stroke="#333" stroke-width="1.9"/></svg>
<svg class="a" style="left:1180px;top:874.4px" width="10" height="7" viewBox="0 0 10 7"><path d="M1.2 1.2 L5 5 L8.8 1.2" fill="none" stroke="#333" stroke-width="1.9"/></svg>
<div class="a " style="left:1027.60px;top:244.60px;width:148.80px;height:15.60px;background:#f3f3f3;"></div>
<div class="a " style="left:1031.40px;top:248.40px;width:8.00px;height:8.00px;border:1px solid #a2a8b8;background:linear-gradient(#fff,#eceef4);"></div>
<div class="a " style="left:1033.20px;top:251.70px;width:4.40px;height:1.40px;background:#445;"></div>
<div class="a t" style="left:1044.80px;top:245.40px;line-height:14px;white-space:nowrap;transform:scaleX(0.850);transform-origin:0 50%;">Prediction method</div>
<div class="a " style="left:1027.60px;top:260.00px;width:148.80px;height:190.80px;background:#fff;border:1.4px solid #858585;border-right:none;border-bottom:1px solid #e0e0e0;"></div>
<div class="a hl" style="left:1029.00px;top:281.20px;width:147.40px;height:17.80px;"></div>
<div class="a t" style="left:1032.00px;top:264.00px;line-height:14px;white-space:nowrap;transform:scaleX(0.783);transform-origin:0 50%;">Theis</div>
<div class="a t" style="left:1032.00px;top:282.80px;line-height:14px;white-space:nowrap;transform:scaleX(0.843);transform-origin:0 50%;">Hantush</div>
<div class="a t" style="left:1032.00px;top:301.60px;line-height:14px;white-space:nowrap;transform:scaleX(0.861);transform-origin:0 50%;">Theis with Jacob Correction</div>
<div class="a t" style="left:1032.00px;top:320.40px;line-height:14px;white-space:nowrap;transform:scaleX(0.808);transform-origin:0 50%;">Neuman</div>
<div class="a t" style="left:1032.00px;top:339.20px;line-height:14px;white-space:nowrap;transform:scaleX(0.836);transform-origin:0 50%;">Double Porosity</div>
<div class="a t" style="left:1032.00px;top:358.00px;line-height:14px;white-space:nowrap;transform:scaleX(0.829);transform-origin:0 50%;">Boulton</div>
<div class="a t" style="left:1032.00px;top:376.80px;line-height:14px;white-space:nowrap;transform:scaleX(0.853);transform-origin:0 50%;">Moench Fracture Flow</div>
<div class="a t" style="left:1032.00px;top:395.60px;line-height:14px;white-space:nowrap;transform:scaleX(0.864);transform-origin:0 50%;">Hantush with Storage</div>
<div class="a t" style="left:1032.00px;top:414.40px;line-height:14px;white-space:nowrap;transform:scaleX(0.856);transform-origin:0 50%;">Neuman &amp; Witherspoon</div>
<div class="a t" style="left:1032.00px;top:433.20px;line-height:14px;white-space:nowrap;transform:scaleX(0.839);transform-origin:0 50%;">Multilayer</div>
<div class="a " style="left:1027.60px;top:451.20px;width:148.80px;height:15.60px;background:#f3f3f3;"></div>
<div class="a " style="left:1031.40px;top:455.00px;width:8.00px;height:8.00px;border:1px solid #a2a8b8;background:linear-gradient(#fff,#eceef4);"></div>
<div class="a " style="left:1033.20px;top:458.30px;width:4.40px;height:1.40px;background:#445;"></div>
<div class="a t" style="left:1044.80px;top:452.00px;line-height:14px;white-space:nowrap;transform:scaleX(0.854);transform-origin:0 50%;">Parameters</div>
<div class="a " style="left:1027.60px;top:467.20px;width:148.80px;height:57.36px;background:#fff;border:1.5px solid #808080;border-right:1px solid #cfcfcf;"></div>
<div class="a " style="left:1094.00px;top:467.20px;width:2.20px;height:57.36px;background:#828282;"></div>
<div class="a t" style="left:1032.00px;top:470.16px;line-height:14px;white-space:nowrap;transform:scaleX(0.900);transform-origin:0 50%;">T [m²/s]</div>
<div class="a t" style="left:1098.40px;top:470.16px;line-height:14px;white-space:nowrap;transform:scaleX(0.900);transform-origin:0 50%;">2.00E-5</div>
<div class="a " style="left:1027.60px;top:485.72px;width:148.80px;height:2.00px;background:#8c8c8c;"></div>
<div class="a t" style="left:1032.00px;top:488.88px;line-height:14px;white-space:nowrap;transform:scaleX(0.900);transform-origin:0 50%;">S</div>
<div class="a t" style="left:1098.40px;top:488.88px;line-height:14px;white-space:nowrap;transform:scaleX(0.900);transform-origin:0 50%;">1.00E-4</div>
<div class="a " style="left:1027.60px;top:504.44px;width:148.80px;height:2.00px;background:#8c8c8c;"></div>
<div class="a t" style="left:1032.00px;top:507.60px;line-height:14px;white-space:nowrap;transform:scaleX(0.900);transform-origin:0 50%;">c [h]</div>
<div class="a t" style="left:1098.40px;top:507.60px;line-height:14px;white-space:nowrap;transform:scaleX(0.900);transform-origin:0 50%;">2.78E3</div>
<div class="a " style="left:1027.60px;top:525.80px;width:148.80px;height:15.60px;background:#f3f3f3;"></div>
<div class="a " style="left:1031.40px;top:529.60px;width:8.00px;height:8.00px;border:1px solid #a2a8b8;background:linear-gradient(#fff,#eceef4);"></div>
<div class="a " style="left:1033.20px;top:532.90px;width:4.40px;height:1.40px;background:#445;"></div>
<div class="a t" style="left:1044.80px;top:526.60px;line-height:14px;white-space:nowrap;transform:scaleX(0.834);transform-origin:0 50%;">Model Assumptions</div>
<div class="a " style="left:1027.60px;top:542.00px;width:148.80px;height:113.52px;background:#fff;border:1.5px solid #808080;border-right:1px solid #cfcfcf;"></div>
<div class="a " style="left:1113.20px;top:542.00px;width:2.20px;height:113.52px;background:#828282;"></div>
<div class="a t" style="left:1032.00px;top:544.96px;line-height:14px;white-space:nowrap;transform:scaleX(0.912);transform-origin:0 50%;">Aquifer type</div>
<div class="a t" style="left:1117.60px;top:544.96px;line-height:14px;white-space:nowrap;transform:scaleX(0.900);transform-origin:0 50%;">Leaky</div>
<div class="a " style="left:1027.60px;top:560.52px;width:148.80px;height:2.00px;background:#8c8c8c;"></div>
<div class="a t" style="left:1032.00px;top:563.68px;line-height:14px;white-space:nowrap;transform:scaleX(0.914);transform-origin:0 50%;">Aquifer extent</div>
<div class="a t" style="left:1117.60px;top:563.68px;line-height:14px;white-space:nowrap;transform:scaleX(0.900);transform-origin:0 50%;">Infinite</div>
<div class="a " style="left:1027.60px;top:579.24px;width:148.80px;height:2.00px;background:#8c8c8c;"></div>
<div class="a t" style="left:1032.00px;top:582.40px;line-height:14px;white-space:nowrap;transform:scaleX(0.921);transform-origin:0 50%;">Isotropy</div>
<div class="a t" style="left:1117.60px;top:582.40px;line-height:14px;white-space:nowrap;transform:scaleX(0.900);transform-origin:0 50%;">Isotropic</div>
<div class="a " style="left:1027.60px;top:597.96px;width:148.80px;height:2.00px;background:#8c8c8c;"></div>
<div class="a t" style="left:1032.00px;top:601.12px;line-height:14px;white-space:nowrap;transform:scaleX(0.828);transform-origin:0 50%;">Discharge</div>
<div class="a t" style="left:1117.60px;top:601.12px;line-height:14px;white-space:nowrap;transform:scaleX(0.900);transform-origin:0 50%;">Variable</div>
<div class="a " style="left:1027.60px;top:616.68px;width:148.80px;height:2.00px;background:#8c8c8c;"></div>
<div class="a t" style="left:1032.00px;top:619.84px;line-height:14px;white-space:nowrap;transform:scaleX(0.870);transform-origin:0 50%;">Well Penetration</div>
<div class="a t" style="left:1117.60px;top:619.84px;line-height:14px;white-space:nowrap;transform:scaleX(0.900);transform-origin:0 50%;">Fully</div>
<div class="a " style="left:1027.60px;top:635.40px;width:148.80px;height:2.00px;background:#8c8c8c;"></div>
<div class="a t" style="left:1032.00px;top:638.56px;line-height:14px;white-space:nowrap;transform:scaleX(0.878);transform-origin:0 50%;">Aquitard Storage</div>
<div class="a " style="left:1117.60px;top:639.76px;width:11.60px;height:11.60px;background:#fff;border:1px solid #505050;"></div>
<div class="a " style="left:1027.60px;top:657.00px;width:148.80px;height:15.60px;background:#f3f3f3;"></div>
<div class="a " style="left:1031.40px;top:660.80px;width:8.00px;height:8.00px;border:1px solid #a2a8b8;background:linear-gradient(#fff,#eceef4);"></div>
<div class="a " style="left:1033.20px;top:664.10px;width:4.40px;height:1.40px;background:#445;"></div>
<div class="a t" style="left:1044.80px;top:657.80px;line-height:14px;white-space:nowrap;transform:scaleX(0.818);transform-origin:0 50%;">Time axis</div>
<div class="a " style="left:1027.60px;top:673.20px;width:148.80px;height:189.60px;background:#fff;border:1.5px solid #808080;border-right:1px solid #cfcfcf;"></div>
<div class="a " style="left:1113.20px;top:673.20px;width:2.20px;height:189.60px;background:#828282;"></div>
<div class="a t" style="left:1032.00px;top:676.22px;line-height:14px;white-space:nowrap;transform:scaleX(0.900);transform-origin:0 50%;">Title</div>
<div class="a t" style="left:1117.60px;top:676.22px;line-height:14px;white-space:nowrap;transform:scaleX(0.900);transform-origin:0 50%;">Time</div>
<div class="a " style="left:1027.60px;top:691.84px;width:148.80px;height:2.00px;background:#8c8c8c;"></div>
<div class="a t" style="left:1032.00px;top:695.06px;line-height:14px;white-space:nowrap;transform:scaleX(0.868);transform-origin:0 50%;">Title Font</div>
<div class="a t" style="left:1117.60px;top:695.06px;line-height:14px;white-space:nowrap;transform:scaleX(0.900);transform-origin:0 50%;"><b>Arial</b></div>
<div class="a " style="left:1027.60px;top:710.68px;width:148.80px;height:2.00px;background:#8c8c8c;"></div>
<div class="a t" style="left:1032.00px;top:713.90px;line-height:14px;white-space:nowrap;transform:scaleX(0.900);transform-origin:0 50%;">Scale</div>
<div class="a t" style="left:1117.60px;top:713.90px;line-height:14px;white-space:nowrap;transform:scaleX(0.900);transform-origin:0 50%;">Linear</div>
<div class="a " style="left:1027.60px;top:729.52px;width:148.80px;height:2.00px;background:#8c8c8c;"></div>
<div class="a t" style="left:1032.00px;top:732.74px;line-height:14px;white-space:nowrap;transform:scaleX(0.900);transform-origin:0 50%;">Minimum</div>
<div class="a t" style="left:1117.60px;top:732.74px;line-height:14px;white-space:nowrap;transform:scaleX(0.900);transform-origin:0 50%;">Auto</div>
<div class="a " style="left:1027.60px;top:748.36px;width:148.80px;height:2.00px;background:#8c8c8c;"></div>
<div class="a t" style="left:1032.00px;top:751.58px;line-height:14px;white-space:nowrap;transform:scaleX(0.900);transform-origin:0 50%;">Maximum</div>
<div class="a t" style="left:1117.60px;top:751.58px;line-height:14px;white-space:nowrap;transform:scaleX(0.900);transform-origin:0 50%;">6</div>
<div class="a " style="left:1027.60px;top:767.20px;width:148.80px;height:2.00px;background:#8c8c8c;"></div>
<div class="a t" style="left:1032.00px;top:770.42px;line-height:14px;white-space:nowrap;transform:scaleX(0.835);transform-origin:0 50%;">Show Values</div>
<div class="a " style="left:1117.60px;top:771.62px;width:11.60px;height:11.60px;background:#fff;border:1px solid #505050;"></div>
<svg class="a" style="left:1117.6000000000001px;top:771.6200000000001px" width="11.6" height="11.6" viewBox="0 0 10.8 10.8"><path d="M2.4 5.4 L4.6 7.8 L8.4 2.8" fill="none" stroke="#555" stroke-width="1.1"/></svg>
<div class="a " style="left:1027.60px;top:786.04px;width:148.80px;height:2.00px;background:#8c8c8c;"></div>
<div class="a t" style="left:1032.00px;top:789.26px;line-height:14px;white-space:nowrap;transform:scaleX(0.858);transform-origin:0 50%;">Value Font</div>
<div class="a t" style="left:1117.60px;top:789.26px;line-height:14px;white-space:nowrap;transform:scaleX(0.900);transform-origin:0 50%;">Arial</div>
<div class="a " style="left:1027.60px;top:804.88px;width:148.80px;height:2.00px;background:#8c8c8c;"></div>
<div class="a t" style="left:1032.00px;top:808.10px;line-height:14px;white-space:nowrap;transform:scaleX(0.869);transform-origin:0 50%;">Value format</div>
<div class="a t" style="left:1117.60px;top:808.10px;line-height:14px;white-space:nowrap;transform:scaleX(0.900);transform-origin:0 50%;">0.#</div>
<div class="a " style="left:1027.60px;top:823.72px;width:148.80px;height:2.00px;background:#8c8c8c;"></div>
<div class="a t" style="left:1032.00px;top:826.94px;line-height:14px;white-space:nowrap;transform:scaleX(1.057);transform-origin:0 50%;">Major unit</div>
<div class="a t" style="left:1117.60px;top:826.94px;line-height:14px;white-space:nowrap;transform:scaleX(0.900);transform-origin:0 50%;">5</div>
<div class="a " style="left:1027.60px;top:842.56px;width:148.80px;height:2.00px;background:#8c8c8c;"></div>
<div class="a t" style="left:1032.00px;top:845.78px;line-height:14px;white-space:nowrap;transform:scaleX(0.900);transform-origin:0 50%;">Gridlines</div>
<div class="a " style="left:1117.60px;top:846.98px;width:11.60px;height:11.60px;background:#fff;border:1px solid #505050;"></div>
<div class="a " style="left:1027.60px;top:864.20px;width:148.80px;height:15.60px;background:#f3f3f3;"></div>
<div class="a " style="left:1031.40px;top:868.00px;width:8.00px;height:8.00px;border:1px solid #a2a8b8;background:linear-gradient(#fff,#eceef4);"></div>
<div class="a " style="left:1033.20px;top:871.30px;width:4.40px;height:1.40px;background:#445;"></div>
<div class="a t" style="left:1044.80px;top:865.00px;line-height:14px;white-space:nowrap;transform:scaleX(0.865);transform-origin:0 50%;">Drawdown axis</div>
<div class="a " style="left:1027.60px;top:880.80px;width:148.80px;height:5.20px;background:#fff;border:1px solid #7c7c7c;border-bottom:none;border-right:1px solid #cfcfcf;overflow:hidden;"><div class="t" style="position:absolute;left:3.6px;top:-0.6px;line-height:14px;transform:scaleX(0.9);transform-origin:0 0">Title</div></div>
<div class="a " style="left:1113.20px;top:880.80px;width:1.80px;height:5.20px;background:#7c7c7c;"></div>
<div class="a " style="left:0.00px;top:893.60px;width:1200.00px;height:18.40px;background:#f0f0f0;border-top:1px solid #dcdcdc;"></div>
<div class="a " style="left:281.00px;top:894.40px;width:919.00px;height:17.60px;background:#f3f3f3;border-left:1px solid #e0e0e0;"></div>
<div class="a s2" style="left:6.40px;top:897.20px;line-height:14px;white-space:nowrap;transform:scaleX(1.024);transform-origin:0 50%;">© Waterloo Hydrogeologic</div>
</div>
</body></html>
